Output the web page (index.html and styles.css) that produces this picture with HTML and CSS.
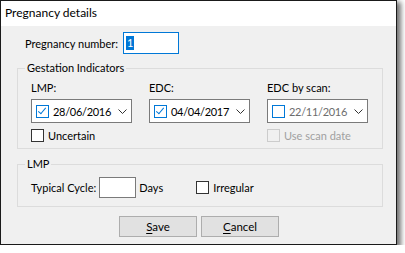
FILE: index.html
```html
<!DOCTYPE html>
<html lang="en">
<head>
    <meta charset="UTF-8">
    <title>Pregnancy details</title>
    <link rel="stylesheet" href="styles.css">
</head>
<body>
    <div class="window">
        <div class="titlebar">Pregnancy details</div>
        <div class="content">

            <div class="number-row">
                <span>Pregnancy number:</span>
                <span class="textbox focused"><span class="selected">1</span></span>
            </div>

            <div class="group gestation">
                <span class="legend">Gestation Indicators</span>
                <div class="columns">
                    <div class="col">
                        <div class="label">LMP:</div>
                        <div class="picker">
                            <span class="pick-check checked"></span>
                            <span class="date">28/06/2016</span>
                            <svg class="arrow" width="9" height="5" viewBox="0 0 9 5"><path d="M0.5 0.5 L4.5 4.5 L8.5 0.5" fill="none" stroke="#333" stroke-width="1"/></svg>
                        </div>
                        <label class="check"><span class="box"></span>Uncertain</label>
                    </div>
                    <div class="col">
                        <div class="label">EDC:</div>
                        <div class="picker">
                            <span class="pick-check checked"></span>
                            <span class="date">04/04/2017</span>
                            <svg class="arrow" width="9" height="5" viewBox="0 0 9 5"><path d="M0.5 0.5 L4.5 4.5 L8.5 0.5" fill="none" stroke="#333" stroke-width="1"/></svg>
                        </div>
                    </div>
                    <div class="col">
                        <div class="label">EDC by scan:</div>
                        <div class="picker off">
                            <span class="pick-check"></span>
                            <span class="date">22/11/2016</span>
                            <svg class="arrow" width="9" height="5" viewBox="0 0 9 5"><path d="M0.5 0.5 L4.5 4.5 L8.5 0.5" fill="none" stroke="#333" stroke-width="1"/></svg>
                        </div>
                        <label class="check disabled"><span class="box"></span>Use scan date</label>
                    </div>
                </div>
            </div>

            <div class="group lmp">
                <span class="legend">LMP</span>
                <div class="cycle-row">
                    <span>Typical Cycle:</span>
                    <span class="textbox cycle"></span>
                    <span class="days">Days</span>
                    <label class="check"><span class="box"></span>Irregular</label>
                </div>
            </div>

            <div class="buttons">
                <div class="btn"><u>S</u>ave</div>
                <div class="btn"><u>C</u>ancel</div>
            </div>
        </div>
    </div>
</body>
</html>
```

FILE: styles.css
```css
body {
    margin: 0;
    background: #ffffff;
    font-family: Lato, "Liberation Sans", sans-serif;
    font-size: 11px;
    color: #000;
}

.window {
    width: 395px;
    height: 243px;
    border: 1px solid #1a1a1a;
    background: #f0f0f0;
    box-shadow: 3px 3px 5px 1px rgba(0, 0, 0, 0.55);
}

.titlebar {
    height: 25px;
    line-height: 24px;
    padding-left: 4px;
    background: #ffffff;
    font-size: 12px;
}

.content {
    padding: 6px 0 0 16px;
}

.number-row {
    display: flex;
    align-items: center;
    gap: 5px;
    padding-left: 8px;
    height: 22px;
}

.textbox {
    display: inline-flex;
    align-items: center;
    box-sizing: border-box;
    height: 22px;
    width: 56px;
    border: 1px solid #7a7a7a;
    background: #fff;
    padding-left: 2px;
}

.textbox.focused {
    border-color: #0078d7;
}

.selected {
    background: #0078d7;
    color: #fff;
    line-height: 14px;
    padding: 0 1px;
}

.group {
    position: relative;
    box-sizing: border-box;
    width: 366px;
    border: 1px solid #dcdcdc;
}

.legend {
    position: absolute;
    top: -9px;
    left: 7px;
    padding: 0 2px;
    line-height: 15px;
    background: #f0f0f0;
}

.gestation {
    margin-top: 14px;
    height: 81px;
}

.columns {
    display: flex;
    gap: 17px;
    padding: 11px 0 0 13px;
}

.col {
    width: 101px;
    display: flex;
    flex-direction: column;
}

.label {
    height: 15px;
    line-height: 15px;
    margin-bottom: 4px;
}

.picker {
    box-sizing: border-box;
    height: 24px;
    border: 1px solid #7a7a7a;
    background: #fff;
    display: flex;
    align-items: center;
    padding-left: 4px;
}

.pick-check {
    box-sizing: border-box;
    width: 13px;
    height: 13px;
    border: 1px solid #0078d7;
    position: relative;
    margin-right: 4px;
}

.pick-check.checked::after {
    content: "";
    position: absolute;
    left: 3px;
    top: 0px;
    width: 3px;
    height: 7px;
    border: solid #0078d7;
    border-width: 0 1px 1px 0;
    transform: rotate(40deg);
}

.date {
    flex: 1;
    font-size: 11px;
    letter-spacing: -0.3px;
}

.picker.off .date {
    color: #6d6d6d;
}

.arrow {
    margin-right: 4px;
}

.check {
    display: flex;
    align-items: center;
    gap: 4px;
    margin-top: 6px;
    height: 13px;
}

.box {
    box-sizing: border-box;
    width: 13px;
    height: 13px;
    border: 1px solid #333;
    background: #fff;
}

.check.disabled {
    color: #a0a0a0;
}

.check.disabled .box {
    border-color: #cccccc;
    background: #f0f0f0;
}

.lmp {
    margin-top: 15px;
    height: 43px;
}

.cycle-row {
    display: flex;
    align-items: center;
    padding: 12px 0 0 13px;
}

.textbox.cycle {
    width: 37px;
    height: 21px;
    margin-left: 3px;
}

.days {
    margin-left: 3px;
}

.cycle-row .check {
    margin: 0 0 0 33px;
}

.buttons {
    display: flex;
    gap: 4px;
    padding-left: 102px;
    margin-top: 9px;
}

.btn {
    box-sizing: border-box;
    width: 78px;
    height: 21px;
    line-height: 19px;
    text-align: center;
    background: #e1e1e1;
    border: 1px solid #adadad;
    font-size: 11.5px;
}

.btn u {
    text-decoration-thickness: 1px;
    text-underline-offset: 2px;
}
```
